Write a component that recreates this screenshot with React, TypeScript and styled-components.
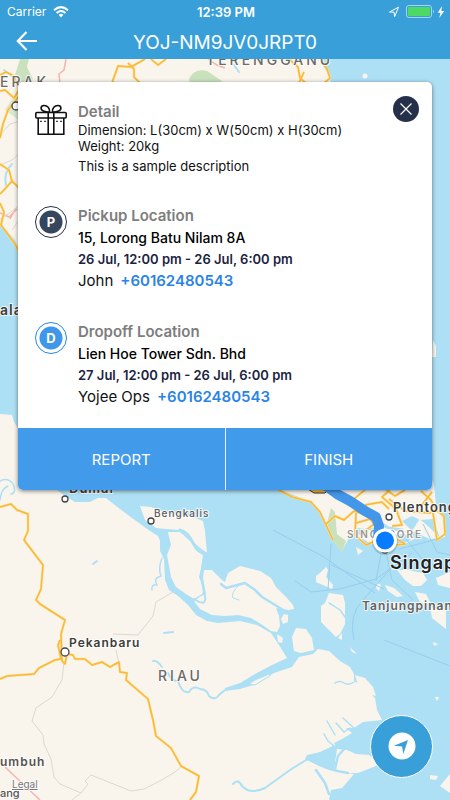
import React from "react";
import styled, { createGlobalStyle } from "styled-components";

const GlobalStyle = createGlobalStyle`
  * { box-sizing: border-box; }
  body { margin: 0; font-family: Inter, "Liberation Sans", sans-serif; }
  button { font-family: inherit; border: 0; padding: 0; cursor: pointer; }
`;

const Screen = styled.div`
  min-height: 100vh;
  display: flex;
  flex-direction: column;
  background: #aee0f5;
`;

const TopBar = styled.header`
  background: #389fd9;
  color: #fff;
`;

const StatusBar = styled.div`
  display: grid;
  grid-template-columns: 1fr auto 1fr;
  align-items: center;
  height: 23px;
  padding: 0 5px 0 7px;
  font-size: 12px;
`;

const StatusGroup = styled.div<{ $end?: boolean }>`
  display: flex;
  align-items: center;
  justify-content: ${(p) => (p.$end ? "flex-end" : "flex-start")};
  gap: ${(p) => (p.$end ? 2 : 7)}px;
`;

const Clock = styled.span`
  font-size: 13px;
  font-weight: 600;
`;

const NavBar = styled.div`
  display: grid;
  grid-template-columns: 54px 1fr 54px;
  align-items: center;
  height: 36px;
  padding-bottom: 1px;
`;

const BackButton = styled.button`
  display: flex;
  align-items: center;
  justify-content: center;
  height: 36px;
  background: none;
  color: #fff;
`;

const Title = styled.h1`
  margin: 4px 0 0;
  text-align: center;
  font-size: 19px;
  line-height: 24px;
  font-weight: 400;
`;

const MapArea = styled.main`
  position: relative;
  flex: 1;
  padding: 23px 18px;
  overflow: hidden;
`;

const MapCanvas = styled.svg`
  position: absolute;
  inset: 0;
  width: 100%;
  height: 100%;
`;

const Card = styled.article`
  position: relative;
  border-radius: 5px;
  background: #fff;
  box-shadow: 0 1px 4px rgba(0, 0, 0, 0.5);
  overflow: hidden;
`;

const CardBody = styled.div`
  display: flex;
  flex-direction: column;
  gap: 28px;
  padding: 20px 17px 18px;
`;

const Section = styled.section`
  display: grid;
  grid-template-columns: 32px 1fr;
  column-gap: 11px;
  align-items: start;
`;

const SectionTitle = styled.h2`
  margin: 0;
  font-size: 15px;
  line-height: 20px;
  font-weight: 600;
  color: #7d7d7d;
`;

const Measure = styled.p`
  margin: 0;
  font-size: 13px;
  line-height: 16px;
  color: #111;
`;

const Description = styled(Measure)`
  margin: 2px 0;
  line-height: 20px;
`;

const Address = styled.p`
  margin: 0;
  font-size: 14px;
  line-height: 24px;
  font-weight: 500;
  color: #000;
`;

const Schedule = styled.p`
  margin: 0;
  font-size: 13px;
  line-height: 18px;
  font-weight: 600;
  color: #1b2340;
`;

const Contact = styled.p`
  display: flex;
  gap: 7px;
  margin: 0;
  font-size: 15px;
  line-height: 26px;
  color: #111;
`;

const Phone = styled.a`
  font-weight: 600;
  color: #2b83e6;
  text-decoration: none;
`;

const Badge = styled.span<{ $ring: string; $fill: string }>`
  display: flex;
  align-items: center;
  justify-content: center;
  width: 32px;
  height: 32px;
  border: 1px solid ${(p) => p.$ring};
  border-radius: 50%;
  background: radial-gradient(circle, ${(p) => p.$fill} 11px, #fff 12px);
  color: #fff;
  font-size: 13px;
  font-weight: 700;
`;

const CloseButton = styled.button`
  position: absolute;
  top: 14px;
  right: 13px;
  display: flex;
  align-items: center;
  justify-content: center;
  width: 26px;
  height: 26px;
  border-radius: 50%;
  background: #25304b;
`;

const Actions = styled.footer`
  display: grid;
  grid-template-columns: 1fr 1fr;
  gap: 1px;
  background: #e6f2fd;
`;

const ActionButton = styled.button`
  height: 62px;
  background: #429aeb;
  color: #fff;
  font-size: 15px;
  font-weight: 400;
`;

const LocateButton = styled.button`
  position: absolute;
  right: 17px;
  bottom: 22px;
  display: flex;
  align-items: center;
  justify-content: center;
  width: 63px;
  height: 63px;
  border: 1px solid #fff;
  border-radius: 50%;
  background: #389fd9;
`;

const WifiIcon = () => (
  <svg width="16" height="12" viewBox="0 0 16 12" fill="none" stroke="#fff" strokeWidth="2" aria-hidden="true">
    <path d="M1 4.3Q8-2 15 4.3" />
    <path d="M3.6 7Q8 3 12.4 7" />
    <path d="M5.6 8.8Q8 6.9 10.4 8.8L8 11.5z" fill="#fff" stroke="none" />
  </svg>
);

const ArrowOutlineIcon = () => (
  <svg width="16" height="12" viewBox="0 0 16 12" fill="none" stroke="#fff" strokeWidth="1" aria-hidden="true">
    <path d="M1.5 6 10.5 1.2 6.7 10.6 6 6.2z" strokeLinejoin="round" />
  </svg>
);

const BatteryIcon = () => (
  <svg width="29" height="13" viewBox="0 0 29 13" fill="none" aria-hidden="true">
    <rect x=".5" y=".5" width="25" height="12" rx="2.5" stroke="#a6d5ee" />
    <rect x="2" y="2" width="22" height="9" rx="1" fill="#4cd964" />
    <path d="M27 4.5Q29 6.5 27 8.5z" fill="#a6d5ee" />
  </svg>
);

const BoltIcon = () => (
  <svg width="8" height="12" viewBox="0 0 8 12" fill="#fff" aria-hidden="true">
    <path d="M5 0 .7 6.7h2.8L2.2 12l5-7H4.3z" />
  </svg>
);

const BackIcon = () => (
  <svg width="22" height="20" viewBox="0 0 22 20" fill="none" stroke="#fff" strokeWidth="2.2" aria-hidden="true">
    <path d="M21 10H2M10.5 1 1.8 10l8.7 9" />
  </svg>
);

const CloseIcon = () => (
  <svg width="12" height="12" viewBox="0 0 12 12" stroke="#fff" strokeWidth="1.2" aria-hidden="true">
    <path d="m.5.5 11 11m0-11-11 11" />
  </svg>
);

const GiftIcon = () => (
  <svg width="32" height="34" viewBox="0 0 32 34" fill="none" stroke="#111" strokeWidth="1.6" aria-hidden="true">
    <rect x=".8" y="10.5" width="30.4" height="5.5" rx="1" />
    <path d="M3.2 16v16.2h25.6V16M13.2 10.5v21.7M18.8 10.5v21.7" />
    <path d="M14.6 10.2C9.5 10 5.8 8.5 6.1 5.8 6.4 2.7 11 2.8 13.2 5.2 14.5 6.7 14.8 8.3 14.6 10.2zM17.4 10.2c5.1-.2 8.8-1.7 8.5-4.4-.3-3.1-4.9-3-7.1-.6-1.3 1.5-1.6 3.1-1.4 5z" />
    <path d="M5 19.3h2m2 0h2m10 0h2m2 0h2" strokeWidth="1" />
  </svg>
);

const LocateIcon = () => (
  <svg width="28" height="30" viewBox="0 0 28 30" aria-hidden="true">
    <circle cx="14" cy="14" r="13.5" fill="#fff" />
    <path d="M6 13.7 20 8l-4.7 14-1.2-7.6z" fill="#389fd9" />
  </svg>
);

const Town = ({ x, y, r = 3 }: { x: number; y: number; r?: number }) => (
  <circle cx={x} cy={y} r={r} fill="#fff" stroke="#444" strokeWidth="1.3" />
);

const LAND = [
  // Peninsula, west coast and the strip above the card
  "M0 59H320L323 66 331 78 328 90H20V252L15 240 7 231 0 226z",
  // Sumatra mainland
  "M0 414 12 415 14 422 18 428 35 470 57 490 65 496 75 502 90 502 98 498 106 498 116 506 132 518 150 531 158 536 160 541 160 551 164 559 165 580 169 590 178 596 188 605 196 615 207 621 218 623 240 621 257 625 271 633 279 645 287 658 270 666 255 674 240 683 225 688 225 691 240 689 257 684 274 673 292 667 299 657 313 654 318 649 329 651 340 661 350 667 354 674 354 681 364 686 375 698 377 710 382 720 363 722 354 728 346 728 352 733 342 739 334 743 336 746 325 751 307 755 305 759 318 765 332 770 340 772 354 774 348 781 342 788 331 790 329 800H0z",
  // Southern delta islands
  "M337 749 347 750 356 754 369 755 380 764 371 768 358 773 345 773 334 769z",
  // Bengkalis
  "M140 506 151 507 169 514 190 516 203 521 205 531 207 553 199 547 187 536 180 530 166 529 156 528 145 520z",
  // Padang
  "M168 532 180 532 190 541 203 553 202 564 199 577 204 590 202 594 194 599 186 594 176 587 171 577 169 566 167 555 171 545z",
  // Rangsang and Tebing Tinggi
  "M204 570 212 570 222 580 225 582 228 573 240 566 260 571 271 578 276 587 286 597 293 605 294 609 289 610 276 608 279 616 280 626 277 632 271 631 264 626 251 618 238 615 225 616 212 615 200 609 194 601 201 596 206 594 203 578z",
  "M284 614 288 615 288 622 283 624 281 619z",
  "M296 628 306 629 312 638 314 650 301 653 294 651 292 637z",
  "M277 634 283 638 282 643 278 642z",
  // Islands across the strait
  "M326 567 328 570 326 577 333 585 332 589 316 582 316 576 320 573z",
  "M329 593 343 595 345 603 345 615 345 624 340 634 336 637 321 622 321 606 325 603z",
  "M338 638 342 633 342 640z",
  "M350 647 357 654 352 652z",
  "M355 675 365 678 373 687 376 696 369 694 358 685z",
  // Johor and Singapore
  "M270 480 283 491 309 501 318 509 326 523 333 541 342 551 351 534 358 528 370 530 379 538 390 542 401 546 414 539 410 529 402 521 412 516 422 521 430 528 440 538 445 537 445 520 436 505 434 485 432 480z",
  "M358 536 366 528 379 529 386 535 405 534 411 540 397 546 382 548 368 542z",
  "M412 531 419 520 433 519 440 538 430 539z",
  "M397 570 408 570 423 573 427 580 421 586 413 586 405 580z",
  "M385 585 394 588 403 596 397 597 388 591z",
  "M377 583 381 585 379 591 376 588z",
  "M415 592 426 594 430 602 421 604z",
  "M436 578 450 572V588L438 585z",
  "M430 607 446 611 446 629 432 618z",
  "M391 602 400 604 403 611 394 609z",
  "M356 547 363 551 358 555z",
  "M433 340 436 346 436 357 432 357z",
  "M450 774 440 786 450 793z",
  "M430 775 438 776 436 780 430 779z",
  "M433 642 438 644 434 646z",
  "M435 697 439 697 437 701z",
];

const RIVERS: [string, number][] = [
  ["M180 530Q188 532 193 543T207 554", 3],
  ["M205 553Q199 575 204 592T194 599", 2],
  ["M221 584 226 588 245 583 255 590 262 597 285 611", 2.5],
  ["M162 558Q158 568 161 576 153 578 157 585 151 584 152 590", 1.5],
  ["M153 661Q157 660 162 667M168 673Q172 682 178 681 182 694 189 692 193 685 200 689 207 689 209 696 215 701 219 695L225 690", 2],
  ["M0 500Q1 489 8 486M0 481Q8 477 13 484 17 493 11 494", 1.5],
  ["M233 784Q238 778 242 786 250 795 265 788L290 770 306 760 335 746", 2],
  ["M307 758Q325 770 348 773M335 769 338 756 345 748M322 761l12 2M316 770 325 783 329 794", 2.5],
  ["M335 683Q340 680 344 683T354 682M324 734 328 741 334 746M336 723l8 9 6-4M327 721l8 14M343 718l12 11", 1.5],
  ["M240 584Q230 594 233 598L239 600", 1],
  ["M329 603 334 606 340 610 345 617", 1.5],
  ["M12 164Q3 173 6 185M4 70l9 7M234 65l5 7", 2],
  ["M93 564l4-3M164 633l9-1", 2],
];

const ROADS = [
  "M0 507 11 504 17 510 28 514V531L24 540 43 565 41 589 36 600 40 604 65 620 61 634 62 661 65 664 67 654 73 655 75 659 85 659 92 665 102 662 110 667 119 662 120 672 127 673 126 680 148 699 153 720 156 736 171 748 181 766 199 776 196 792 190 800",
  "M60 640 58 645 61 659 55 660 39 668 34 674 7 676 0 679",
  "M0 75 6 72 14 76 19 90 14 98 5 90 0 91M19 96 8 110 3 124 0 138M0 164 9 170 12 181 4 190 0 194M12 181 19 188M0 203 4 212 1 225 15 244 19 252",
  "M112 83 118 66 131 67 145 59M128 63 134 69 134 77 141 84M151 59 158 65 166 59",
  "M289 59 298 67 300 78 307 84M321 60 327 69 330 78 323 84M304 72 298 85",
  "M275 488 292 497 311 502 320 512 333 540M326 524 335 516 344 520 354 511 367 515 377 515",
  "M354 499 366 489H385L395 496 405 490M365 505 382 502 389 509M390 490 382 497 396 509 400 520 402 525 392 526M389 499 405 511 430 513 433 509M421 491 431 500 436 510 444 516 445 534 437 540 433 513M432 492 422 505",
  "M356 513 355 535 366 545 380 539 398 540 405 544 386 546M356 523 370 519 379 530M360 535 374 524M371 515 378 526",
];

const FERRIES =
  "M273 530 324 557 375 593M331 544 328 590M295 581 311 592 340 589 376 579 412 553M331 565 367 581 384 589M385 548 392 580 413 600M354 640Q348 615 363 600L394 565M384 640 450 666M399 549 441 538M382 548 376 581M423 524 437 552 450 555M406 539 427 565";

const TRAILS =
  "M64 662 62 680 52 697 36 708 32 721 43 735 44 744 51 759 54 777 60 784 81 793 72 800M81 793 88 784 85 781 91 775 131 791 144 789 160 781 175 772 181 767M173 592 156 602 153 616 138 635 113 634M116 650 119 664M20 121 10 124 0 135M20 153 12 160 0 165M12 230 19 220M0 219 8 214 20 205";

const Label = styled.text<{ $size: number; $weight?: number; $tracking?: number; $color?: string }>`
  font-size: ${(p) => p.$size}px;
  font-weight: ${(p) => p.$weight ?? 600};
  letter-spacing: ${(p) => p.$tracking ?? 0}px;
  fill: ${(p) => p.$color ?? "#403d3a"};
  stroke: #fff;
  stroke-opacity: 0.8;
  stroke-width: 2px;
  paint-order: stroke;
`;

const RegionMap = () => (
  <MapCanvas viewBox="0 59 450 741" preserveAspectRatio="xMinYMin slice" role="img" aria-label="Map of Riau and Singapore">
    <rect y="59" width="450" height="741" fill="#aee0f5" />
    <path d={LAND.join("")} fill="#f9f5ed" />
    <g fill="#c9e2bd">
      <path d="M20 59H29L27 67 33 79 20 83 15 75z" />
      <path d="M14 96 5 110 20 121V99z" opacity=".7" />
      <path d="M189 79Q194 68 207 71L222 81 218 84H190z" />
      <path d="M327 523 331 508 335 512 337 534 346 541 342 552 333 541z" />
      <path d="M370 528 378 530 374 534z" />
    </g>
    <path
      d="M66 59 64 70 59 74 60 84M208 59 217 65 225 68M0 213 9 217 17 209M10 219 16 208M5 767 40 800"
      fill="none"
      stroke="#f4b5ac"
      strokeWidth="1.5"
    />
    <path d={TRAILS} fill="none" stroke="#ddd8d2" />
    <g fill="none" stroke="#aee0f5" strokeLinecap="round" strokeLinejoin="round">
      {RIVERS.map(([d, w]) => (
        <path key={d} d={d} strokeWidth={w} />
      ))}
      <path d="M358 506 374 518 388 528 402 530" strokeWidth="3" />
    </g>
    <path d="M249 684 255 680 262 677 269 674 270 676 263 680 255 685z" fill="#f9f5ed" stroke="#aee0f5" />
    <path d={FERRIES} fill="none" stroke="#95cfec" />
    <g fill="none" strokeLinejoin="round">
      <path d={ROADS.join("")} stroke="#f8df9f" strokeWidth="2.5" />
      <path d={ROADS.join("")} stroke="#fcb934" strokeWidth="1.5" />
    </g>
    <circle cx="365" cy="76" r="2.5" fill="#f9f5ed" />
    <path d="M308 489 314 493 325 493 331 487" fill="#fcb934" stroke="#333" />

    <Town x={16} y={106} r={4} />
    <Town x={65} y={499} />
    <Town x={151} y={521} />
    <Town x={65} y={652} r={4} />
    <Town x={389} y={517} />
    <Town x={385} y={550} />

    <Label x="0" y="87" $size={14} $weight={500} $tracking={3} $color="#6d6964">ERAK</Label>
    <Label x="206" y="65" $size={14} $weight={500} $tracking={3} $color="#6d6964">TERENGGANU</Label>
    <Label x="0" y="315" $size={14} $tracking={1}>ala</Label>
    <Label x="69" y="493" $size={13} $tracking={1}>Dumai</Label>
    <Label x="154" y="517" $size={10} $weight={500} $tracking={1} $color="#5d5956">Bengkalis</Label>
    <Label x="69" y="647" $size={12} $tracking={1}>Pekanbaru</Label>
    <Label x="158" y="681" $size={14} $weight={500} $tracking={3} $color="#6d6964">RIAU</Label>
    <Label x="393" y="512" $size={13} $tracking={1}>Plentong</Label>
    <Label x="347" y="538" $size={10} $tracking={2} $color="#99948e">SINGAPORE</Label>
    <Label x="390" y="569" $size={18} $tracking={1} $color="#222">Singapore</Label>
    <Label x="362" y="610" $size={12} $tracking={1} $color="#65615d">Tanjungpinang</Label>
    <Label x="0" y="766" $size={12} $tracking={1} $color="#56524f">umbuh</Label>
    <Label x="0" y="797" $size={11} $weight={500} $color="#56524f">ang</Label>
    <Label x="12" y="788" $size={10} $weight={400} $color="#777" textDecoration="underline">Legal</Label>

    <path d="M326 486 337 494 350 501 365 511 376 517 379 526 378 538" fill="none" stroke="#4496e8" strokeWidth="10" strokeLinejoin="round" />
    <circle cx="385" cy="542" r="13" fill="#000" opacity=".15" />
    <circle cx="385" cy="540.5" r="12" fill="#fff" />
    <circle cx="385" cy="540.5" r="9" fill="#087cff" />
  </MapCanvas>
);

const stops = [
  {
    letter: "P",
    ring: "#25304b",
    fill: "#36465c",
    title: "Pickup Location",
    address: "15, Lorong Batu Nilam 8A",
    schedule: "26 Jul, 12:00 pm - 26 Jul, 6:00 pm",
    name: "John",
  },
  {
    letter: "D",
    ring: "#2688df",
    fill: "#3e97e9",
    title: "Dropoff Location",
    address: "Lien Hoe Tower Sdn. Bhd",
    schedule: "27 Jul, 12:00 pm - 26 Jul, 6:00 pm",
    name: "Yojee Ops",
  },
];

export default function App() {
  return (
    <Screen>
      <GlobalStyle />
      <TopBar>
        <StatusBar>
          <StatusGroup>
            <span>Carrier</span>
            <WifiIcon />
          </StatusGroup>
          <Clock>12:39 PM</Clock>
          <StatusGroup $end>
            <ArrowOutlineIcon />
            <BatteryIcon />
            <BoltIcon />
          </StatusGroup>
        </StatusBar>
        <NavBar>
          <BackButton aria-label="Back">
            <BackIcon />
          </BackButton>
          <Title>YOJ-NM9JV0JRPT0</Title>
        </NavBar>
      </TopBar>
      <MapArea>
        <RegionMap />
        <Card>
          <CardBody>
            <Section>
              <GiftIcon />
              <div>
                <SectionTitle>Detail</SectionTitle>
                <Measure>Dimension: L(30cm) x W(50cm) x H(30cm)</Measure>
                <Measure>Weight: 20kg</Measure>
                <Description>This is a sample description</Description>
              </div>
            </Section>
            {stops.map((s) => (
              <Section key={s.letter}>
                <Badge $ring={s.ring} $fill={s.fill}>{s.letter}</Badge>
                <div>
                  <SectionTitle>{s.title}</SectionTitle>
                  <Address>{s.address}</Address>
                  <Schedule>{s.schedule}</Schedule>
                  <Contact>
                    {s.name}
                    <Phone href="tel:+60162480543">+60162480543</Phone>
                  </Contact>
                </div>
              </Section>
            ))}
          </CardBody>
          <Actions>
            <ActionButton>REPORT</ActionButton>
            <ActionButton>FINISH</ActionButton>
          </Actions>
          <CloseButton aria-label="Close">
            <CloseIcon />
          </CloseButton>
        </Card>
        <LocateButton aria-label="Show my location">
          <LocateIcon />
        </LocateButton>
      </MapArea>
    </Screen>
  );
}
